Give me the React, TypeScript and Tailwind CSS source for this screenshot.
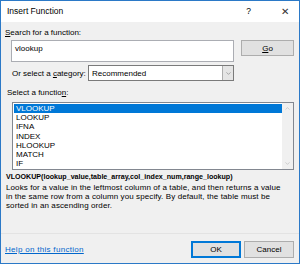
import { ChevronDown, ChevronUp } from "lucide-react";

const functions = ["VLOOKUP", "LOOKUP", "IFNA", "INDEX", "HLOOKUP", "MATCH", "IF"];

export default function App() {
    return (
        <div
            className="w-[300px] h-[264px] flex flex-col border border-[#2b79c7] bg-[#f0f0f0] text-[8px] leading-[9px] text-black overflow-hidden"
            style={{ fontFamily: '"Liberation Sans", Arial, sans-serif' }}
        >
            {/* Title bar */}
            <div className="h-[21px] bg-white flex items-center pl-[6px] pr-[10px] shrink-0">
                <span className="text-[8.5px]">Insert Function</span>
                <span className="ml-auto mr-[30px] text-[8.5px]">?</span>
                <span className="text-[10px] text-[#333]">✕</span>
            </div>

            <div className="flex flex-col px-[4px]">
                {/* Search */}
                <div className="mt-[6px]">
                    <span className="underline">S</span>earch for a function:
                </div>
                <div className="flex mt-[3px] ml-[6px]">
                    <div className="w-[223px] h-[22px] bg-white border border-[#abadb3] px-[3px] pt-[3px]">vlookup</div>
                    <button className="ml-[7px] w-[53px] h-[16px] bg-[#e1e1e1] border border-[#adadad] flex items-center justify-center">
                        <span className="underline">G</span>o
                    </button>
                </div>

                {/* Category */}
                <div className="flex items-center mt-[3px] ml-[7px]">
                    <span className="w-[76px] whitespace-nowrap">
                        Or select a <span className="underline">c</span>ategory:
                    </span>
                    <div className="w-[146px] h-[16px] bg-white border border-[#7a7a7a] flex items-center">
                        <span className="pl-[3px]">Recommended</span>
                        <div className="ml-auto w-[11px] h-full bg-[#e5e5e5] border-l border-[#adadad] flex items-center justify-center">
                            <ChevronDown size={7} strokeWidth={1.5} className="text-[#555]" />
                        </div>
                    </div>
                </div>

                {/* Function list */}
                <div className="mt-[7px] ml-[2px]">
                    Select a functio<span className="underline">n</span>:
                </div>
                <div className="mt-[5px] ml-[7px] w-[282px] h-[68px] bg-white border border-[#828790] flex overflow-hidden">
                    <div className="flex-1 pt-[1px] pl-[1px]">
                        {functions.map((name, idx) => (
                            <div
                                key={name}
                                className={`h-[9.2px] pl-[2px] leading-[9.2px] ${idx === 0 ? "bg-[#0078d7] text-white" : ""}`}
                            >
                                {name}
                            </div>
                        ))}
                    </div>
                    <div className="w-[11px] bg-[#f0f0f0] flex flex-col items-center justify-between py-[2px]">
                        <ChevronUp size={7} strokeWidth={1.5} className="text-[#a0a0a0]" />
                        <ChevronDown size={7} strokeWidth={1.5} className="text-[#a0a0a0]" />
                    </div>
                </div>

                {/* Description */}
                <div className="mt-[3px] ml-[1px] font-bold text-[7.1px] leading-[9px] whitespace-nowrap">
                    VLOOKUP(lookup_value,table_array,col_index_num,range_lookup)
                </div>
                <div className="mt-[2px] ml-[1px] leading-[8.9px] tracking-[0.1px] whitespace-nowrap">
                    Looks for a value in the leftmost column of a table, and then returns a value
                    <br />
                    in the same row from a column you specify. By default, the table must be
                    <br />
                    sorted in an ascending order.
                </div>
            </div>

            {/* Footer */}
            <div className="mt-auto border-t border-[#e3e3e3] flex items-start pl-[4px] pr-[5px] pt-[7px] pb-[5px]">
                <span className="mt-[4px] text-[#0066cc] underline tracking-[0.3px]">Help on this function</span>
                <button className="ml-auto w-[50px] h-[17px] bg-[#e1e1e1] border-2 border-[#0078d7] flex items-center justify-center">
                    OK
                </button>
                <button className="ml-[3px] w-[50px] h-[17px] bg-[#e1e1e1] border border-[#adadad] flex items-center justify-center">
                    Cancel
                </button>
            </div>
        </div>
    );
}
